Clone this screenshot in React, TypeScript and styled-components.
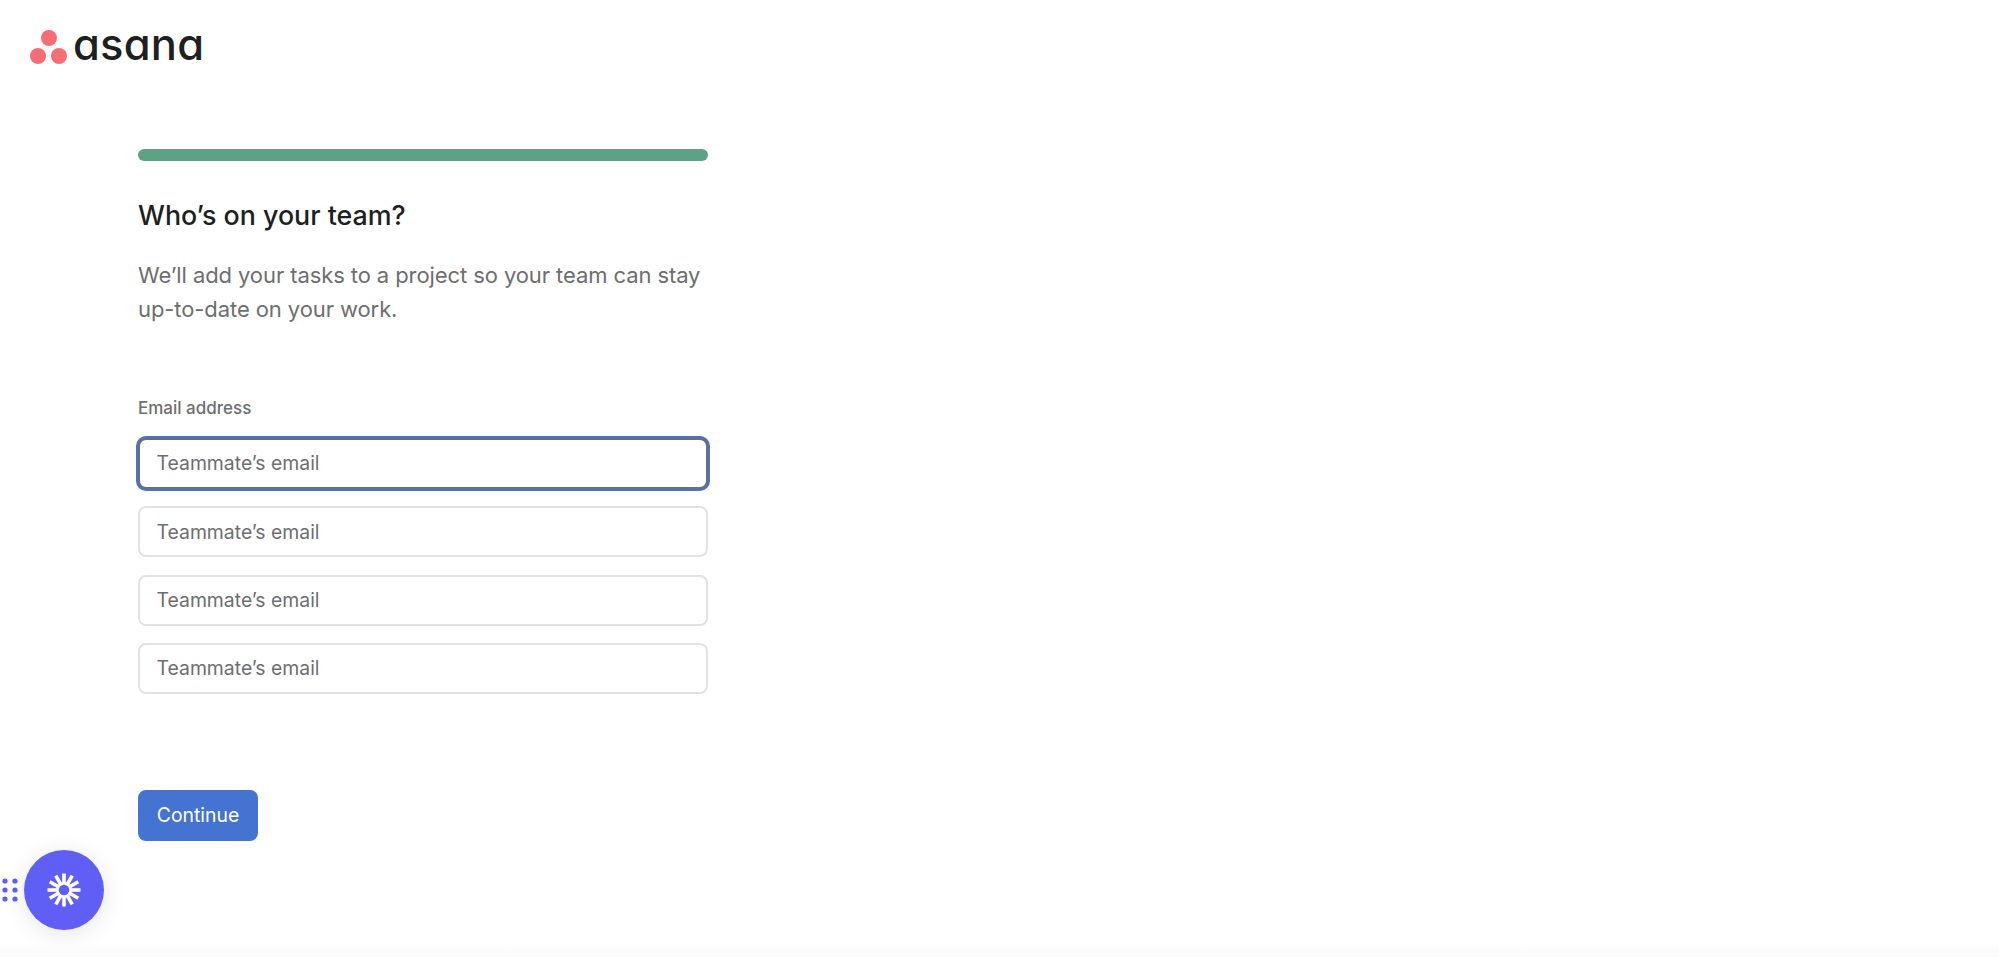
import React from "react";
import styled, { createGlobalStyle } from "styled-components";

const Global = createGlobalStyle`
  html, body { margin: 0; padding: 0; background: #fff; }
  body { font-family: Inter, "Liberation Sans", sans-serif; -webkit-font-smoothing: antialiased; }
  * { box-sizing: border-box; }
`;

const Page = styled.div`
  position: relative;
  width: 1999px;
  height: 957px;
  overflow: hidden;
  background: #fff;
  display: flex;
  flex-direction: column;
`;

const BottomFade = styled.div`
  position: absolute;
  left: 0;
  right: 0;
  bottom: 0;
  height: 14px;
  background: linear-gradient(to bottom, rgba(250, 250, 250, 0), #f9f9f9);
`;

const Header = styled.header`
  height: 149px;
  padding: 30px 0 0 30px;
  display: flex;
  align-items: flex-start;
  gap: 5px;
`;

const Wordmark = styled.span`
  font-family: Inter, sans-serif;
  font-feature-settings: "cv11" 1;
  font-size: 43.5px;
  line-height: 29px;
  font-weight: 500;
  letter-spacing: 0.2px;
  color: #1e1f21;
`;

const Main = styled.main`
  width: 570px;
  margin-left: 138px;
  display: flex;
  flex-direction: column;
`;

const Progress = styled.div`
  height: 12px;
  border-radius: 6px;
  background: #5da283;
`;

const Title = styled.h1`
  margin: 37px 0 0;
  font-size: 26.8px;
  line-height: 34px;
  font-weight: 500;
  color: #1e1f21;
`;

const Lead = styled.p`
  margin: 26px 0 0;
  font-size: 22px;
  line-height: 34.4px;
  font-weight: 400;
  letter-spacing: -0.09px;
  color: #6d6e6f;
`;

const Label = styled.label`
  margin-top: 71px;
  font-size: 17px;
  line-height: 20px;
  font-weight: 500;
  color: #6d6e6f;
`;

const Fields = styled.div`
  margin-top: 20px;
  display: flex;
  flex-direction: column;
  gap: 17.4px;
`;

const Field = styled.input<{ $focused?: boolean }>`
  display: block;
  width: 100%;
  height: 51px;
  padding: 0 16.5px;
  background: #fff;
  border-radius: 8px;
  border: 2px solid ${(p) => (p.$focused ? "#6d6e6f" : "#e2e2e2")};
  box-shadow: ${(p) => (p.$focused ? "0 0 0 2px #4573d2" : "none")};
  outline: none;
  font-family: inherit;
  font-size: 19.4px;
  color: #1e1f21;
  &::placeholder { color: #6d6e6f; opacity: 1; }
`;

const Continue = styled.button`
  margin-top: 96px;
  align-self: flex-start;
  width: 120px;
  height: 51px;
  padding: 0;
  border: 0;
  border-radius: 8px;
  background: #4573d2;
  color: #fff;
  font-family: inherit;
  font-size: 19.4px;
  font-weight: 400;
`;

const Launcher = styled.div`
  position: absolute;
  left: 2px;
  top: 850px;
  display: flex;
  align-items: center;
  gap: 6px;
`;

const Handle = styled.svg`
  width: 16px;
  height: 24px;
  display: block;
`;

const Bubble = styled.div`
  width: 80px;
  height: 80px;
  border-radius: 50%;
  background: #5f5ff6;
  display: flex;
  align-items: center;
  justify-content: center;
  box-shadow: 0 4px 24px rgba(0, 0, 0, 0.1);
`;

const Logo = () => (
  <svg width="38" height="36" viewBox="0 0 38 36" aria-hidden="true">
    <g fill="#f56e73">
      <circle cx="19" cy="8" r="8" />
      <circle cx="8" cy="26" r="8" />
      <circle cx="29" cy="26" r="8" />
    </g>
  </svg>
);

const Spark = () => (
  <svg width="34" height="34" viewBox="0 0 34 34" aria-hidden="true">
    <g stroke="#fff" strokeWidth="3.6">
      {Array.from({ length: 12 }).map((_, i) => (
        <line key={i} x1="17" y1="0.5" x2="17" y2="11" transform={`rotate(${i * 30} 17 17)`} />
      ))}
    </g>
    <circle cx="17" cy="17" r="6.6" fill="none" stroke="#fff" strokeWidth="2.6" />
  </svg>
);

export default function App() {
  return (
    <Page>
      <Global />
      <Header>
        <Logo />
        <Wordmark>asana</Wordmark>
      </Header>
      <Main>
        <Progress />
        <Title>Who’s on your team?</Title>
        <Lead>
          We’ll add your tasks to a project so your team can stay
          <br />
          up-to-date on your work.
        </Lead>
        <Label>Email address</Label>
        <Fields>
          <Field $focused placeholder="Teammate’s email" />
          <Field placeholder="Teammate’s email" />
          <Field placeholder="Teammate’s email" />
          <Field placeholder="Teammate’s email" />
        </Fields>
        <Continue>Continue</Continue>
      </Main>
      <Launcher>
        <Handle viewBox="0 0 16 24">
          <g fill="#5f5ff6">
            {[3, 12, 21].flatMap((y) =>
              [3, 13].map((x) => <circle key={`${x}-${y}`} cx={x} cy={y} r="2.6" />)
            )}
          </g>
        </Handle>
        <Bubble>
          <Spark />
        </Bubble>
      </Launcher>
      <BottomFade />
    </Page>
  );
}
